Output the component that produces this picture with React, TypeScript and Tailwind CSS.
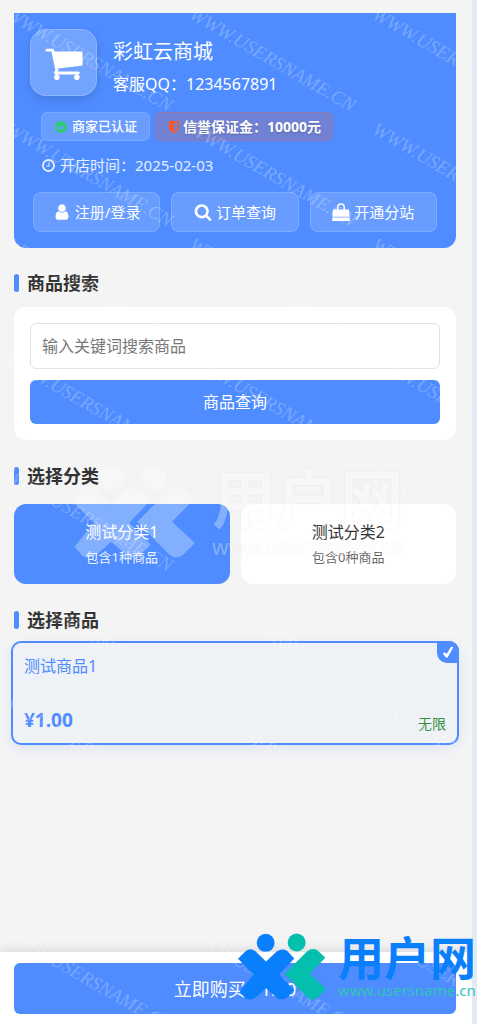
import type { ReactNode } from "react";

const ICONS = {
  cart: "M704 1536q0 52-38 90t-90 38-90-38-38-90 38-90 90-38 90 38 38 90zm896 0q0 52-38 90t-90 38-90-38-38-90 38-90 90-38 90 38 38 90zm128-1088v512q0 24-16.5 42.5t-40.5 21.5l-1044 122q13 60 13 70 0 16-24 64h920q26 0 45 19t19 45-19 45-45 19h-1024q-26 0-45-19t-19-45q0-11 8-31.5t16-36 21.5-40 15.5-29.5l-177-823h-204q-26 0-45-19t-19-45 19-45 45-19h256q16 0 28.5 6.5t19.5 15.5 13 24.5 8 26 5.5 29.5 4.5 26h1201q26 0 45 19t19 45z",
  user: "M1536 1399q0 109-62.5 187t-150.5 78h-854q-88 0-150.5-78t-62.5-187q0-85 8.5-160.5t31.5-152 58.5-131 94-89 134.5-34.5q131 128 313 128t313-128q76 0 134.5 34.5t94 89 58.5 131 31.5 152 8.5 160.5zm-256-887q0 159-112.5 271.5t-271.5 112.5-271.5-112.5-112.5-271.5 112.5-271.5 271.5-112.5 271.5 112.5 112.5 271.5z",
  search: "M1216 832q0-185-131.5-316.5t-316.5-131.5-316.5 131.5-131.5 316.5 131.5 316.5 316.5 131.5 316.5-131.5 131.5-316.5zm512 832q0 52-38 90t-90 38q-54 0-90-38l-343-342q-179 124-399 124-143 0-273.5-55.5t-225-150-150-225-55.5-273.5 55.5-273.5 150-225 225-150 273.5-55.5 273.5 55.5 225 150 150 225 55.5 273.5q0 220-124 399l343 343q37 37 37 90z",
  bag: "M100 640H500V400Q500 20 896 20T1292 400V640H1692L1750 1380H42ZM640 640H1152V420Q1152 170 896 170T640 420ZM36 1450H1756L1780 1780H12Z",
  clock: "M1024 544v448q0 14-9 23t-23 9h-320q-14 0-23-9t-9-23v-64q0-14 9-23t23-9h224v-352q0-14 9-23t23-9h64q14 0 23 9t9 23zm416 352q0-148-73-273t-198-198-273-73-273 73-198 198-73 273 73 273 198 198 273 73 273-73 198-198 73-273zm224 0q0 209-103 385.5t-279.5 279.5-385.5 103-385.5-103-279.5-279.5-103-385.5 103-385.5 279.5-279.5 385.5-103 385.5 103 279.5 279.5 103 385.5z",
  verified: "M1412 734q0-28-18-46l-91-90q-19-19-45-19t-45 19l-408 407-226-226q-19-19-45-19t-45 19l-91 90q-18 18-18 46 0 27 18 45l362 362q19 19 45 19 27 0 46-19l543-543q18-18 18-45zm252 162q0 209-103 385.5t-279.5 279.5-385.5 103-385.5-103-279.5-279.5-103-385.5 103-385.5 279.5-279.5 385.5-103 385.5 103 279.5 279.5 103 385.5z",
  shield: "M1344 960v-640h-448v1137q119-63 213-137 235-184 235-360zm192-768v768q0 86-33.5 170.5t-83 150-118 127.5-126.5 103-121 77.5-89.5 49.5-42.5 20q-12 6-26 6t-26-6q-16-7-42.5-20t-89.5-49.5-121-77.5-126.5-103-118-127.5-83-150-33.5-170.5v-768q0-26 19-45t45-19h1152q26 0 45 19t19 45z",
};

function Icon({ name, className }: { name: keyof typeof ICONS; className: string }) {
  return (
    <svg viewBox="0 0 1792 1792" fill="currentColor" fillRule={name === "bag" ? "evenodd" : "nonzero"} aria-hidden="true" className={className}>
      <path d={ICONS[name]} />
    </svg>
  );
}

function SectionTitle({ children }: { children: ReactNode }) {
  return (
    <h2 className="flex items-center gap-2 text-lg leading-6 font-bold text-[#333]">
      <span className="h-[18px] w-[5px] rounded-full bg-[#4e8cff]" />
      {children}
    </h2>
  );
}

function ShopAction({ icon, label }: { icon: keyof typeof ICONS; label: string }) {
  return (
    <button
      type="button"
      className="flex h-10 flex-1 items-center justify-center gap-1 rounded-lg border border-white/15 bg-white/15 text-[15px] text-white"
    >
      <Icon name={icon} className="size-[18px]" />
      {label}
    </button>
  );
}

function BrandMark({ className, left, right }: { className: string; left: string; right: string }) {
  return (
    <svg viewBox="33 38 264 200" className={className} aria-hidden="true">
      <g className={left}>
        <circle cx="116" cy="67" r="27" />
        <path d="M33 115L55 93Q70 80 86 93L117 123L149 93Q164 82 180 91L202 114L156 162L202 209L181 230Q164 243 148 230L117 203L87 230Q70 243 55 233L38 214L80 162Z" />
      </g>
      <g className={right}>
        <circle cx="209" cy="66" r="27" />
        <path d="M173 160L240 93Q256 80 272 90L295 112L248 160L297 206L272 231Q256 243 241 230Z" />
      </g>
    </svg>
  );
}

const STAMP_COLUMNS = [5, 188, 371];
const STAMP_ROWS = [18, 133, 248, 363, 478, 593, 708, 823, 938];

function DiagonalStamps() {
  return (
    <svg className="pointer-events-none absolute inset-0 size-full" aria-hidden="true">
      {STAMP_ROWS.flatMap((y) =>
        STAMP_COLUMNS.map((x) => (
          <text
            key={`${x}-${y}`}
            transform={`translate(${x} ${y}) rotate(30)`}
            className="fill-white/25 font-['Liberation_Serif',serif] text-[19px] italic"
          >
            WWW.USERSNAME.CN
          </text>
        )),
      )}
    </svg>
  );
}

export default function App() {
  return (
    <div className="relative font-['Noto_Sans','Noto_Sans_CJK_SC',sans-serif]">
      <div className="relative flex min-h-screen flex-col overflow-hidden border-r-[5px] border-[#e3eaf5] bg-[#f4f4f4]">
        <main className="flex flex-col pr-4 pl-[14px] pt-[13px]">
          <header className="rounded-b-xl bg-[#4e8cff] px-4 py-4 text-white">
            <div className="flex items-start gap-4">
              <div className="flex size-[67px] items-center justify-center rounded-2xl border border-white/20 bg-white/20 shadow-[0_4px_8px_rgba(0,0,0,0.12)]">
                <Icon name="cart" className="size-10" />
              </div>
              <div className="pt-[7px]">
                <h1 className="text-xl leading-8">彩虹云商城</h1>
                <p className="text-base leading-8">客服QQ：1234567891</p>
              </div>
            </div>
            <div className="mt-3 flex gap-[5px] pl-[11px]">
              <span className="flex h-[29px] items-center gap-1 rounded-md border border-white/10 bg-white/15 px-3 text-[13px] font-medium">
                <Icon name="verified" className="size-[14px] text-[#2ecc71]" />
                商家已认证
              </span>
              <span className="flex h-[29px] items-center gap-[2px] rounded-md border border-[#ff5722]/20 bg-[#ff5722]/20 px-[11px] text-sm font-bold text-shadow-[0_1px_2px_rgba(0,0,0,0.2)]">
                <Icon name="shield" className="size-[14px] text-[#ff5722]" />
                信誉保证金：10000元
              </span>
            </div>
            <p className="mt-3 flex items-center gap-1 pl-[11px] text-[15px] leading-6 text-white/85">
              <Icon name="clock" className="size-[15px]" />
              开店时间：2025-02-03
            </p>
            <nav className="mt-[15px] flex gap-[11px] px-[3px]">
              <ShopAction icon="user" label="注册/登录" />
              <ShopAction icon="search" label="订单查询" />
              <ShopAction icon="bag" label="开通分站" />
            </nav>
          </header>

          <section className="mt-[23px] flex flex-col gap-3">
            <SectionTitle>商品搜索</SectionTitle>
            <form className="flex flex-col gap-[11px] rounded-xl bg-white p-4">
              <input
                type="text"
                aria-label="商品搜索"
                placeholder="输入关键词搜索商品"
                className="h-[46px] rounded-md border border-[#e2e2e2] px-[11px] text-base placeholder:text-[#777]"
              />
              <button type="button" className="h-11 rounded-md bg-[#4e8cff] text-base text-white">
                商品查询
              </button>
            </form>
          </section>

          <section className="mt-6 flex flex-col gap-4">
            <SectionTitle>选择分类</SectionTitle>
            <div className="grid grid-cols-2 gap-[11px]">
              <button type="button" className="h-20 rounded-xl bg-[#4e8cff] text-white">
                <span className="block text-base leading-[26px]">测试分类1</span>
                <span className="block text-[13px] leading-6 text-white/90">包含1种商品</span>
              </button>
              <button type="button" className="h-20 rounded-xl bg-white text-[#333]">
                <span className="block text-base leading-[26px]">测试分类2</span>
                <span className="block text-[13px] leading-6 text-[#666]">包含0种商品</span>
              </button>
            </div>
          </section>

          <section className="mt-6 flex flex-col gap-[9px]">
            <SectionTitle>选择商品</SectionTitle>
            <button
              type="button"
              className="relative -mx-[3px] flex h-[104px] flex-col justify-between rounded-[10px] border-2 border-[#4e8cff] bg-[#eef1f6] px-[11px] py-[9px] text-left shadow-[0_4px_12px_rgba(78,140,255,0.15)]"
            >
              <span className="text-base leading-7 text-[#4e8cff]">测试商品1</span>
              <span className="flex w-full items-end justify-between leading-7">
                <span className="text-[19px] font-bold text-[#4e8cff]">¥1.00</span>
                <span className="text-sm leading-5 text-[#388e3c]">无限</span>
              </span>
              <span className="absolute -top-[2px] -right-[2px] flex size-[22px] items-center justify-center rounded-tr-[10px] rounded-bl-[10px] bg-[#4e8cff]">
                <svg viewBox="0 0 12 12" className="size-3" aria-hidden="true">
                  <path d="M.8 7.6L2.8 6.3L4.6 8L9.2 .6L11.4 1.3L5.6 11.4L4 11.6Z" fill="white" />
                </svg>
              </span>
            </button>
          </section>
        </main>

        <footer className="mt-auto bg-white pt-[11px] pr-4 pb-[10px] pl-[14px] shadow-[0_-2px_10px_rgba(0,0,0,0.12)]">
          <button type="button" className="h-[51px] w-full rounded-md bg-[#4e8cff] text-lg text-white">
            立即购买 ¥1.00
          </button>
        </footer>

        <DiagonalStamps />

        <div className="pointer-events-none absolute top-[463px] left-[72px] flex items-center gap-[17px] opacity-30" aria-hidden="true">
          <BrandMark className="h-[93px] w-[123px]" left="fill-white" right="fill-white" />
          <div className="text-white text-shadow-[0_0_2px_rgba(0,0,0,0.2)]">
            <p className="text-[64px] leading-[72px] font-bold">用户网</p>
            <p className="text-[21px] leading-6">www.usersname.cn</p>
          </div>
        </div>
      </div>

      <div className="pointer-events-none absolute right-px bottom-6 flex items-center gap-3">
        <BrandMark className="h-[67px] w-[88px]" left="fill-[#0a7ffb]" right="fill-[#04bfae]" />
        <div>
          <p className="text-[46px] leading-[46px] font-bold text-[#0a7ffb]">用户网</p>
          <p className="text-[15px] leading-5 text-[#2fc6b4]">www.usersname.cn</p>
        </div>
      </div>
    </div>
  );
}
